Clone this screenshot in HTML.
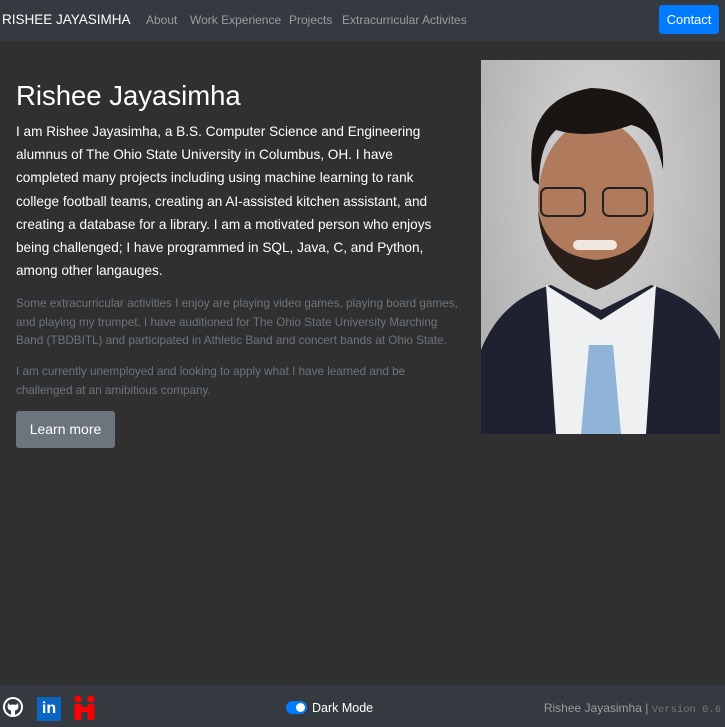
<!DOCTYPE html>
<html><head><style>
*{margin:0;padding:0;box-sizing:border-box}
body{width:725px;height:727px;background:#303030;font-family:"Liberation Sans",sans-serif;position:relative;overflow:hidden;color:#fff}
nav{position:absolute;top:0;left:0;width:725px;height:41px;background:#343a40}
.brand{position:absolute;left:2px;top:12px;font-size:13.5px;color:#fff}
.nl{position:absolute;top:13px;font-size:12px;color:#9a9da0;white-space:nowrap}
.contact{position:absolute;left:659px;top:5px;width:60px;height:29px;background:#007bff;border-radius:3px;font-size:13px;color:#fff;text-align:center;line-height:29px}
h1{position:absolute;left:16px;top:80px;font-size:27.5px;font-weight:400}
.lead{position:absolute;left:16px;top:120px;font-size:13.6px;line-height:23.2px;white-space:nowrap}
.sm{position:absolute;left:16px;font-size:11.7px;line-height:18.5px;color:#6c757d;white-space:nowrap}
.btn{position:absolute;left:16px;top:411px;width:99px;height:37px;background:#6c757d;border-radius:3px;font-size:14px;line-height:37px;text-align:center}
.photo{position:absolute;left:481px;top:60px;width:239px;height:374px;background:radial-gradient(ellipse at 50% 30%,#d6d6d6,#a8a8a8);overflow:hidden}
footer{position:absolute;left:0;top:685px;width:725px;height:42px;background:#343a40}
</style></head><body>
<nav>
<div class="brand">RISHEE JAYASIMHA</div>
<div class="nl" style="left:146px">About</div>
<div class="nl" style="left:190px">Work Experience</div>
<div class="nl" style="left:289px">Projects</div>
<div class="nl" style="left:342px">Extracurricular Activites</div>
<div class="contact">Contact</div>
</nav>
<h1>Rishee Jayasimha</h1>
<div class="lead">I am Rishee Jayasimha, a B.S. Computer Science and Engineering<br>alumnus of The Ohio State University in Columbus, OH. I have<br>completed many projects including using machine learning to rank<br>college football teams, creating an AI-assisted kitchen assistant, and<br>creating a database for a library. I am a motivated person who enjoys<br>being challenged; I have programmed in SQL, Java, C, and Python,<br>among other langauges.</div>
<div class="sm" style="top:295px">Some extracurricular activities I enjoy are playing video games, playing board games,<br>and playing my trumpet. I have auditioned for The Ohio State University Marching<br>Band (TBDBITL) and participated in Athletic Band and concert bands at Ohio State.</div>
<div class="sm" style="top:363px">I am currently unemployed and looking to apply what I have learned and be<br>challenged at an amibitious company.</div>
<div class="btn">Learn more</div>
<div class="photo">
<svg width="239" height="374" viewBox="0 0 239 374">
<path d="M0 290 Q20 240 70 225 L120 250 L170 225 Q220 240 239 280 L239 374 L0 374Z" fill="#1e2230"/>
<path d="M65 225 L120 260 L175 225 L165 374 L75 374Z" fill="#eef0f2"/>
<path d="M108 285 L132 285 L140 374 L100 374Z" fill="#8fb4d8"/>
<ellipse cx="115" cy="140" rx="58" ry="80" fill="#b07a5c"/>
<path d="M57 150 Q60 210 115 230 Q170 210 173 150 Q165 195 115 200 Q65 195 57 150Z" fill="#2a1f1a"/>
<path d="M52 120 Q40 40 110 28 Q185 30 182 110 Q175 70 150 65 Q110 80 75 70 Q58 85 58 125Z" fill="#1a1412"/>
<rect x="60" y="128" width="44" height="28" rx="6" fill="none" stroke="#222" stroke-width="2"/>
<rect x="122" y="128" width="44" height="28" rx="6" fill="none" stroke="#222" stroke-width="2"/>
<rect x="92" y="180" width="44" height="10" rx="5" fill="#f0e8e0"/>
</svg>
</div>
<footer>
<svg style="position:absolute;left:2px;top:11px" width="22" height="22" viewBox="0 0 22 22"><circle cx="11" cy="11" r="10" fill="#fff"/><circle cx="11" cy="11" r="8" fill="#343a40"/><path d="M6 7 L8 9 Q11 8 14 9 L16 7 L16.5 11 Q16 14 13 14.5 L13 19 L9 19 L9 14.5 Q6 14 5.5 11Z" fill="#fff"/></svg>
<div style="position:absolute;left:37px;top:12px;width:24px;height:24px;background:#0a66c2;color:#fff;font-weight:700;font-size:16px;line-height:24px;text-align:center">in</div>
<svg style="position:absolute;left:74px;top:10px" width="22" height="26" viewBox="0 0 22 26"><circle cx="4" cy="4" r="3.5" fill="#f00"/><circle cx="17" cy="4" r="3.5" fill="#f00"/><rect x="0.5" y="9" width="7" height="16" rx="2" fill="#f00"/><rect x="13.5" y="9" width="7" height="16" rx="2" fill="#f00"/><rect x="4" y="12" width="13" height="5" fill="#f00"/></svg>
<div style="position:absolute;left:286px;top:16px;width:21px;height:13px;border-radius:7px;background:#007bff"><div style="position:absolute;right:2px;top:2px;width:9px;height:9px;border-radius:50%;background:#fff"></div></div>
<div style="position:absolute;left:312px;top:16px;font-size:12.5px">Dark Mode</div>
<div style="position:absolute;right:4px;top:16px;font-size:12px;color:#9a9da0;white-space:nowrap">Rishee Jayasimha | <span style="font-family:'Liberation Mono',monospace;font-size:10.5px;color:#777">Version 0.6</span></div>
</footer>
</body></html>
